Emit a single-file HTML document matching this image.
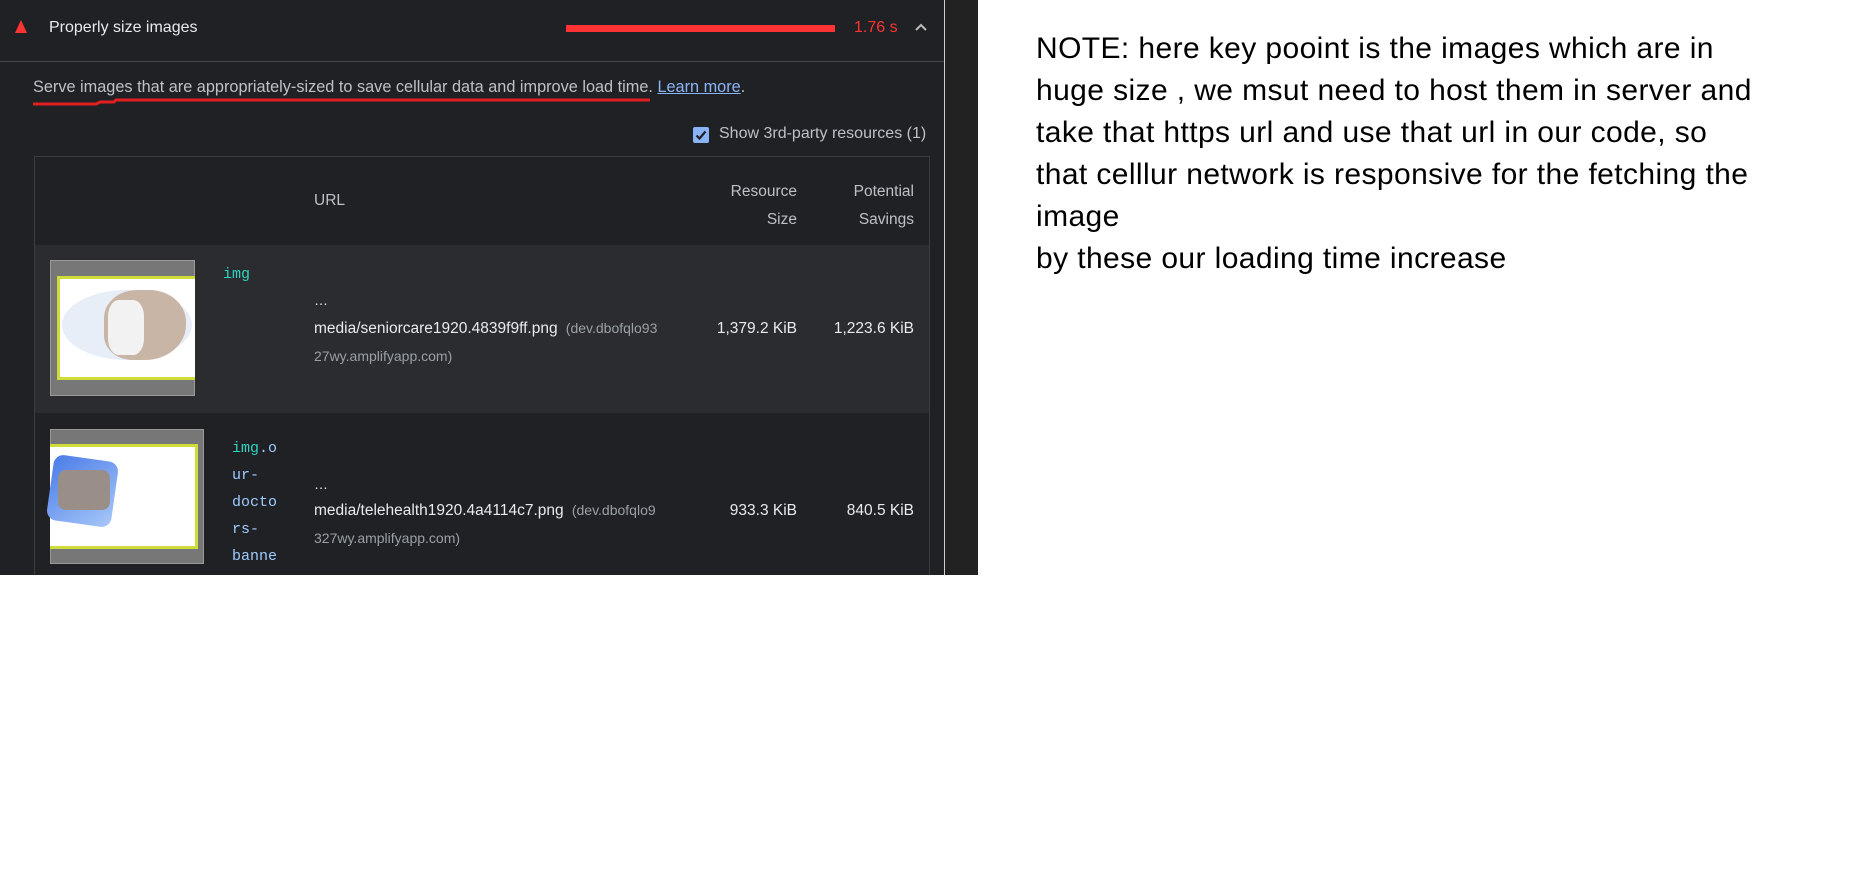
<!DOCTYPE html>
<html><head><meta charset="utf-8"><style>
*{margin:0;padding:0;box-sizing:border-box}
body{width:1876px;height:885px;background:#fff;position:relative;overflow:hidden;font-family:"Liberation Sans",Arial,sans-serif}
.panel{position:absolute;left:0;top:0;width:978px;height:575px;background:#202124;overflow:hidden}
.vl{position:absolute;left:944px;top:0;width:1px;height:575px;background:#cfcfcf}
.rp{position:absolute;left:945px;top:0;width:33px;height:575px;background:#222}
.a{position:absolute;white-space:nowrap}
.mono{font-family:"Liberation Mono","DejaVu Sans Mono",monospace;font-size:15px}
</style></head><body>
<div class="panel">
  <div class="a" style="left:15px;top:20px;width:0;height:0;border-left:6px solid transparent;border-right:6px solid transparent;border-bottom:13px solid #ff3333"></div>
  <div class="a" style="left:49px;top:19px;color:#e8eaed;font-size:16px">Properly size images</div>
  <div class="a" style="left:566px;top:25px;width:269px;height:7px;background:#ff3333"></div>
  <div class="a" style="left:854px;top:19px;color:#ff3333;font-size:16px">1.76 s</div>
  <svg class="a" style="left:914px;top:21px" width="14" height="12" viewBox="0 0 14 12"><path d="M2 9 L7 4 L12 9" stroke="#bbb" stroke-width="2" fill="none"/></svg>
  <div class="a" style="left:0;top:61px;width:944px;height:1px;background:#4a4a4a"></div>
  <div class="a" style="left:33px;top:78px;color:#bdc1c6;font-size:16.3px">Serve images that are appropriately-sized to save cellular data and improve load time. <span style="color:#8ab4f8;text-decoration:underline">Learn more</span>.</div>
  <svg class="a" style="left:32px;top:96px" width="622" height="10"><path d="M1 8 L64 8 L68 6 L82 6 L84 4 L618 4" stroke="#e02020" stroke-width="3" fill="none"/></svg>
  <div class="a" style="left:693px;top:127px;width:16px;height:16px;background:#8ab4f8;border-radius:2px"></div>
  <svg class="a" style="left:693px;top:127px" width="16" height="16"><path d="M3.5 8.5 L6.5 11.5 L12.5 4.5" stroke="#202124" stroke-width="2.2" fill="none"/></svg>
  <div class="a" style="left:719px;top:125px;color:#bdc1c6;font-size:16px">Show 3rd-party resources (1)</div>
  <div class="a" style="left:34px;top:156px;width:896px;height:430px;border:1px solid #3c3c3c"></div>
  <div class="a" style="left:314px;top:192px;color:#bdc1c6;font-size:15.5px">URL</div>
  <div class="a" style="left:697px;top:178px;width:100px;text-align:right;color:#bdc1c6;font-size:15.5px;line-height:28px">Resource<br>Size</div>
  <div class="a" style="left:814px;top:178px;width:100px;text-align:right;color:#bdc1c6;font-size:15.5px;line-height:28px">Potential<br>Savings</div>
  <div class="a" style="left:35px;top:245px;width:894px;height:168px;background:#2b2c30"></div>
  <div class="a" style="left:50px;top:260px;width:145px;height:136px;background:#777;border:1px solid #999"></div>
  <div class="a" style="left:57px;top:276px;width:138px;height:104px;background:#fff;border:3px solid #cddc39;border-right:none"></div>
  <div class="a" style="left:62px;top:290px;width:130px;height:70px;background:#e8eef8;border-radius:50%"></div>
  <div class="a" style="left:104px;top:290px;width:82px;height:70px;background:#c9b5a6;border-radius:40% 45% 50% 35%"></div>
  <div class="a" style="left:108px;top:300px;width:36px;height:55px;background:#f2f2f2;border-radius:30%"></div>
  <div class="a mono" style="left:223px;top:266px;color:#2dd4bf">img</div>
  <div class="a" style="left:314px;top:292px;color:#e8eaed;font-size:14px">…</div>
  <div class="a" style="left:314px;top:320px;color:#e8eaed;font-size:15.5px">media/seniorcare1920.4839f9ff.png <span style="color:#9aa0a6;font-size:14px">&nbsp;(dev.dbofqlo93</span></div>
  <div class="a" style="left:314px;top:348px;color:#9aa0a6;font-size:14px">27wy.amplifyapp.com)</div>
  <div class="a" style="left:697px;top:320px;width:100px;text-align:right;color:#e8eaed;font-size:15.5px">1,379.2 KiB</div>
  <div class="a" style="left:814px;top:320px;width:100px;text-align:right;color:#e8eaed;font-size:15.5px">1,223.6 KiB</div>
  <div class="a" style="left:50px;top:429px;width:154px;height:135px;background:#777;border:1px solid #999"></div>
  <div class="a" style="left:50px;top:444px;width:148px;height:105px;background:#fff;border:3px solid #cddc39;border-left:none"></div>
  <div class="a" style="left:50px;top:458px;width:65px;height:66px;background:linear-gradient(135deg,#4a7be8,#a8c8f8);border-radius:10px;transform:rotate(8deg)"></div>
  <div class="a" style="left:58px;top:470px;width:52px;height:40px;background:#9a8f88;border-radius:8px"></div>
  <div class="a mono" style="left:232px;top:435px;line-height:27px;color:#9ecbff"><span style="color:#2dd4bf">img</span>.o<br>ur-<br>docto<br>rs-<br>banne</div>
  <div class="a" style="left:314px;top:476px;color:#e8eaed;font-size:14px">…</div>
  <div class="a" style="left:314px;top:502px;color:#e8eaed;font-size:15.5px">media/telehealth1920.4a4114c7.png <span style="color:#9aa0a6;font-size:14px">&nbsp;(dev.dbofqlo9</span></div>
  <div class="a" style="left:314px;top:530px;color:#9aa0a6;font-size:14px">327wy.amplifyapp.com)</div>
  <div class="a" style="left:697px;top:502px;width:100px;text-align:right;color:#e8eaed;font-size:15.5px">933.3 KiB</div>
  <div class="a" style="left:814px;top:502px;width:100px;text-align:right;color:#e8eaed;font-size:15.5px">840.5 KiB</div>
  <div class="vl"></div><div class="rp"></div>
</div>
<div class="a" style="left:1036px;top:28px;color:#000;font-size:30px;letter-spacing:0.4px;line-height:42px;white-space:normal;width:840px">NOTE: here key pooint is the images which are in<br>huge size , we msut need to host them in server and<br>take that https url and use that url in our code, so<br>that celllur network is responsive for the fetching the<br>image<br>by these our loading time increase</div>
</body></html>
